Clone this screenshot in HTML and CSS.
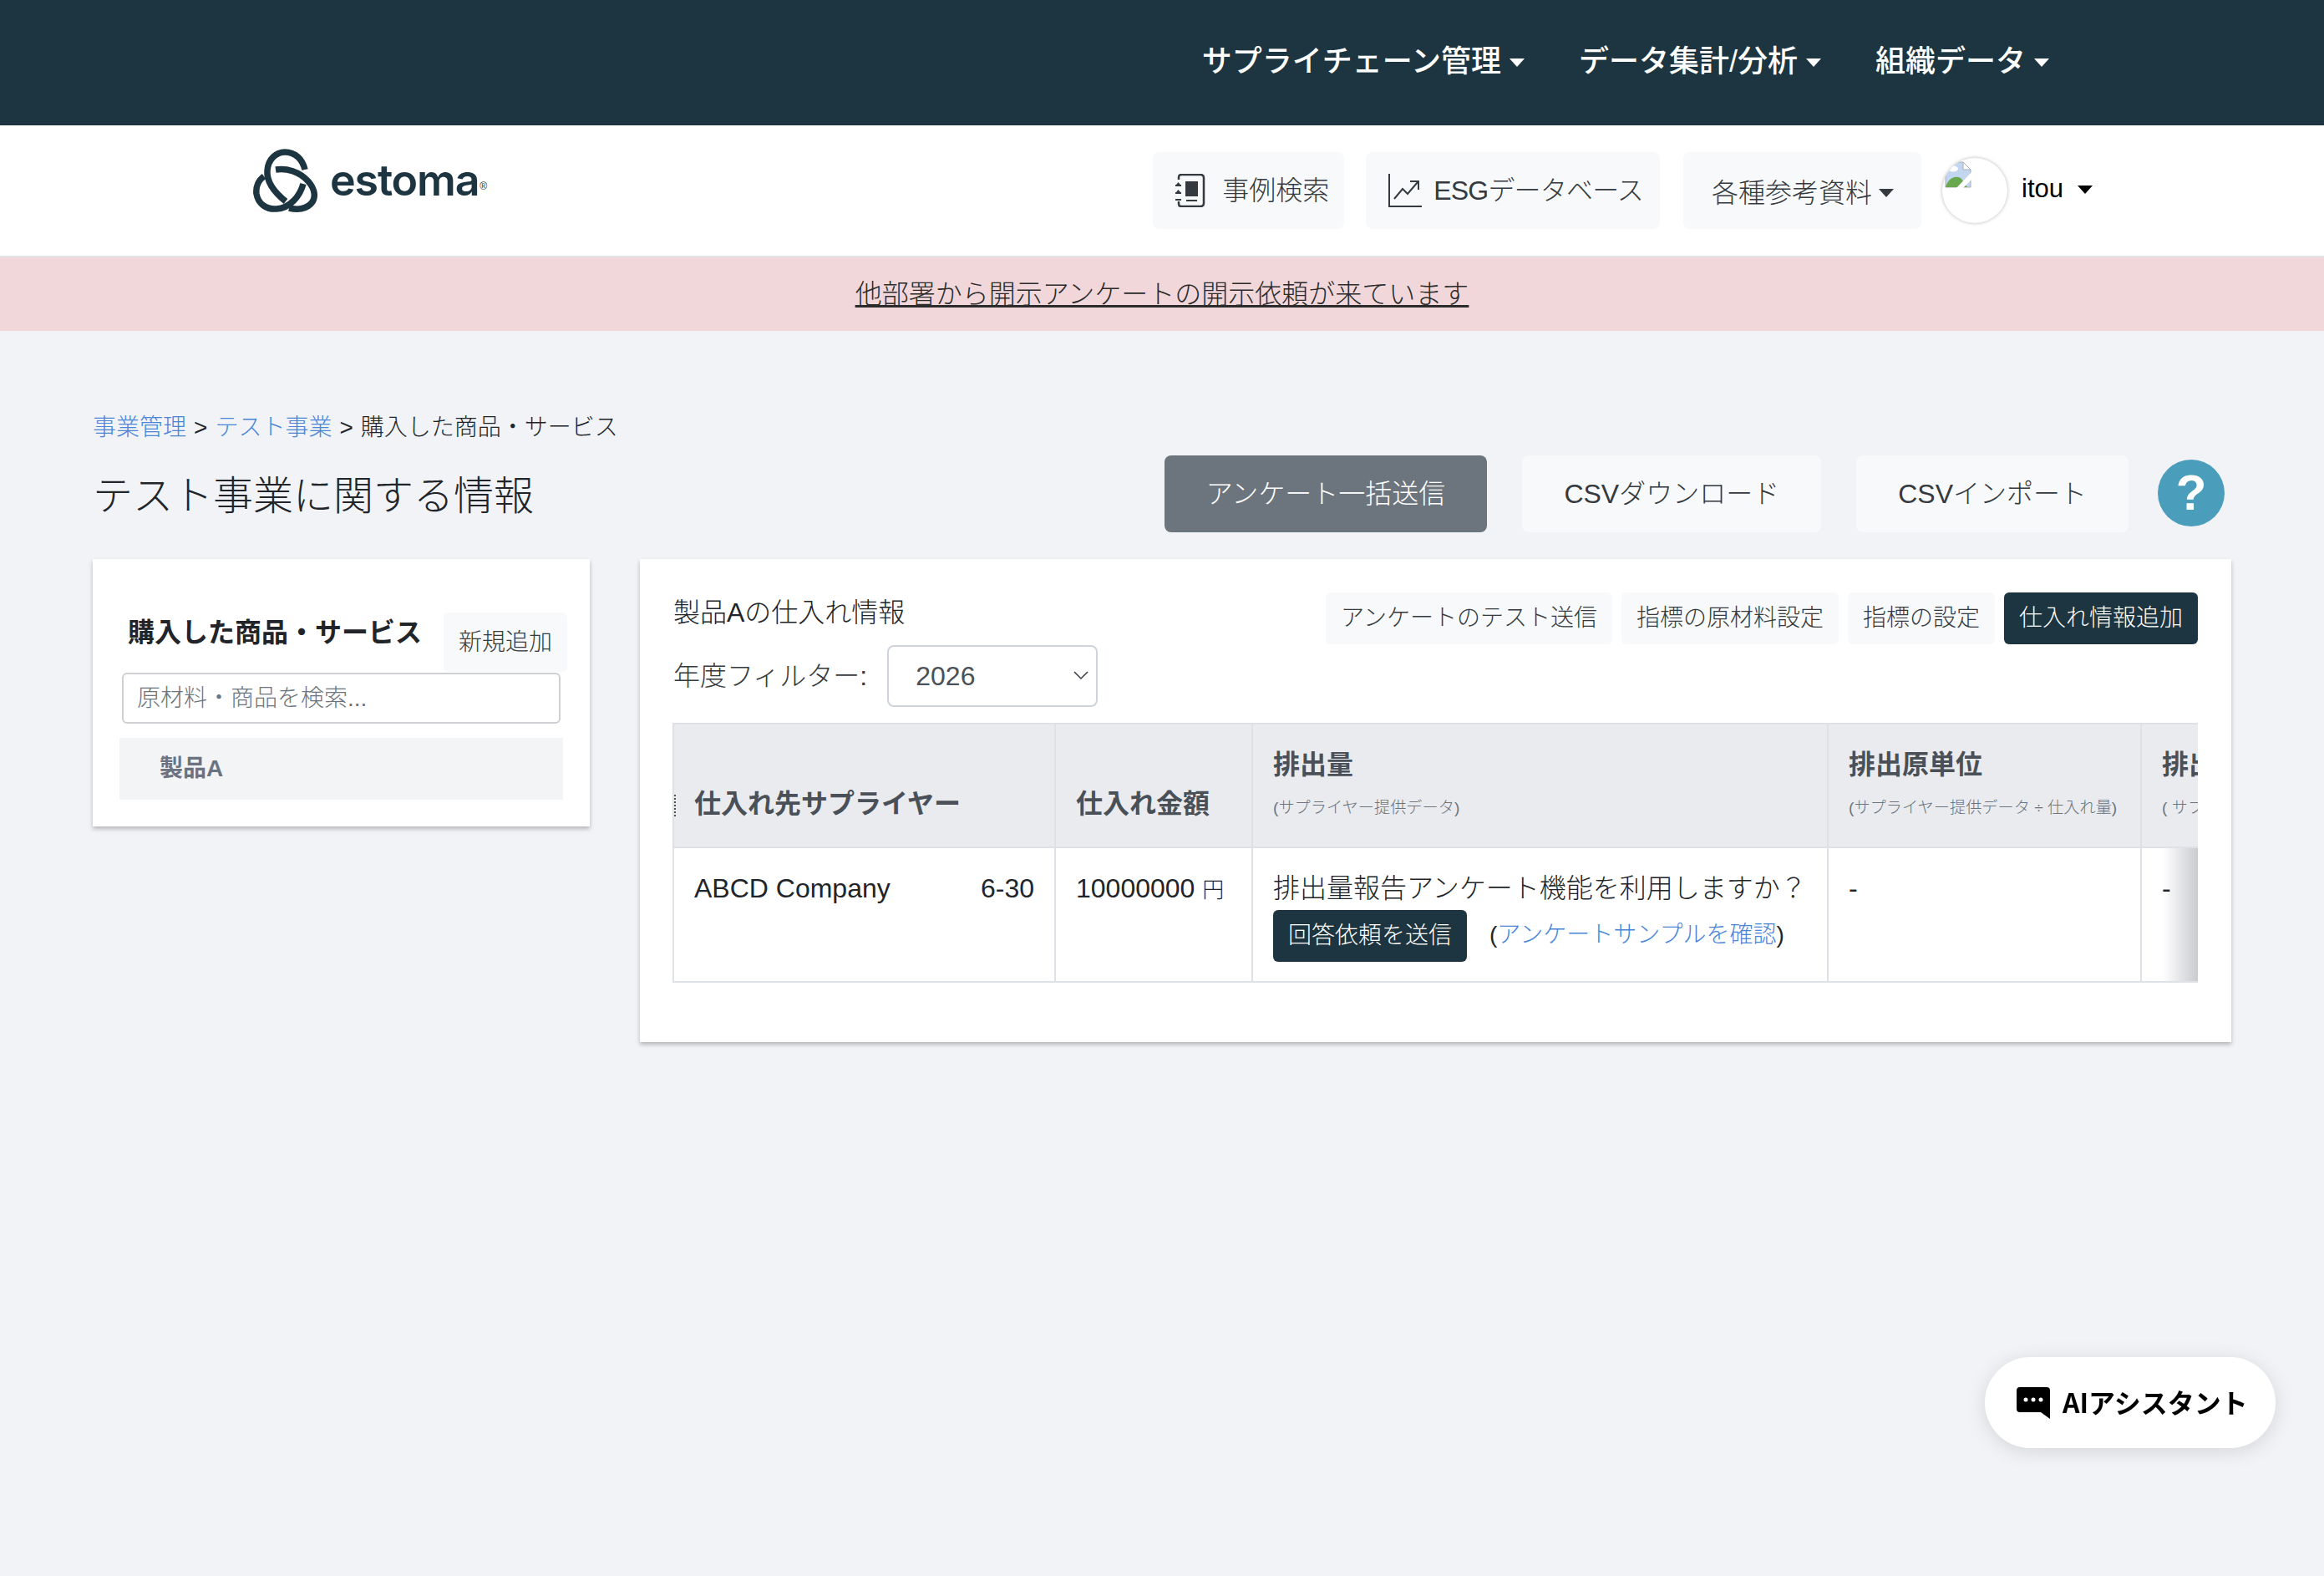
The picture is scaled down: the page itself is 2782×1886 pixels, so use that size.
FILE: index.html
```html
<!DOCTYPE html>
<html lang="ja">
<head>
  <meta charset="UTF-8" />
  <title>estoma</title>
  <link rel="stylesheet" href="styles.css">
</head>
<body>

  <div class="topbar">
    <a class="topbar-link">サプライチェーン管理<span class="caret"></span></a>
    <a class="topbar-link">データ集計/分析<span class="caret"></span></a>
    <a class="topbar-link">組織データ<span class="caret"></span></a>
  </div>

  <header class="header">
    <div class="logo">
      <svg class="logo-mark" viewBox="0 0 80 76" fill="none" stroke="#1d3540" stroke-width="7.5">
        <path d="M39 63 C24 51 16 38 17 26 C18 12 28 4 38 4 C50 4 59 12 62 25" />
        <path d="M27 25 C40 23 55 27 66 39 C74 48 76 59 69 66 C62 73 52 73 43 71" />
        <path d="M13 33 C6 38 3 46 4 54 C6 66 16 73 28 72 C44 71 56 57 60 42" />
      </svg>
      <span class="logo-text">estoma</span><span class="logo-reg">®</span>
    </div>
    <div class="header-actions">
      <a class="light-btn">
        <svg class="btn-icon" viewBox="0 0 36 40" fill="none" stroke="#343a40" stroke-width="2.5">
          <path d="M4 7 V4 Q4 1 7 1 H30 Q34 1 34 5 V35 Q34 39 30 39 H7 Q4 39 4 36 V33" />
          <rect x="12" y="9" width="15" height="18" fill="#343a40" stroke="none" />
          <rect x="13" y="31" width="13" height="2" fill="#343a40" stroke="none" />
          <path d="M0 14 H7 M0 23 H7 M0 31 H7" stroke-width="2" />
          <path d="M3.500 10 L6 13 H1 Z M3.500 19 L6 22 H1 Z" fill="#343a40" stroke="none" />
        </svg>
        事例検索
      </a>
      <a class="light-btn light-btn-esg">
        <svg class="btn-icon chart-icon" viewBox="0 0 40 40" fill="none" stroke="#343a40">
          <path d="M1 0 V39 H40" stroke-width="2" />
          <path d="M7 30 L17 18 L23 24 L35 10 M26 9 H36 V19" stroke-width="2" />
        </svg>
        ESGデータベース
      </a>
      <a class="light-btn light-btn-drop">各種参考資料<span class="caret"></span></a>
      <div class="user">
        <div class="avatar">
          <svg class="broken-img" viewBox="0 0 32 32">
            <path d="M1 1 H22 L31 10 V31 H1 Z" fill="#c3d6ef" stroke="#a8adb3" stroke-width="1" />
            <path d="M22 1 L31 10 H22 Z" fill="#fff" stroke="#a8adb3" stroke-width="1" />
            <path d="M1 31 C4 20 14 16 20 21 L27 31 Z" fill="#6aa84f" />
            <path d="M32 13 L14 32 H22 L32 22 Z" fill="#fff" />
            <ellipse cx="10" cy="9" rx="6" ry="3.500" fill="#fff" />
          </svg>
        </div>
        <span class="user-name">itou</span><span class="caret caret-black"></span>
      </div>
    </div>
  </header>

  <div class="notice"><a>他部署から開示アンケートの開示依頼が来ています</a></div>

  <main class="page">
    <div class="breadcrumb"><a>事業管理</a><span class="sep">&gt;</span><a>テスト事業</a><span class="sep">&gt;</span>購入した商品・サービス</div>

    <div class="title-row">
      <h1>テスト事業に関する情報</h1>
      <div class="title-actions">
        <a class="big-btn big-btn-gray">アンケート一括送信</a>
        <a class="big-btn">CSVダウンロード</a>
        <a class="big-btn">CSVインポート</a>
        <a class="help">?</a>
      </div>
    </div>

    <div class="columns">
      <section class="card side">
        <div class="side-head">
          <h2>購入した商品・サービス</h2>
          <a class="small-btn">新規追加</a>
        </div>
        <input class="search" type="text" placeholder="原材料・商品を検索...">
        <div class="side-item">製品A</div>
      </section>

      <section class="card detail">
        <div class="detail-head">
          <div class="detail-left">
            <div class="detail-name">製品Aの仕入れ情報</div>
            <div class="filter">
              <label>年度フィルター:</label>
              <div class="select">2026
                <svg class="chevron" viewBox="0 0 20 20" fill="none" stroke="#343a40" stroke-width="1.500"><path d="M2 5 L10 13 L18 5" /></svg>
              </div>
            </div>
          </div>
          <div class="detail-actions">
            <a class="small-btn">アンケートのテスト送信</a>
            <a class="small-btn">指標の原材料設定</a>
            <a class="small-btn">指標の設定</a>
            <a class="small-btn small-btn-dark">仕入れ情報追加</a>
          </div>
        </div>

        <div class="table-wrap">
          <table class="data">
            <colgroup>
              <col class="col-a"><col class="col-b"><col class="col-c"><col class="col-d"><col class="col-e">
            </colgroup>
            <thead>
              <tr>
                <th class="th-low th-first">仕入れ先サプライヤー</th>
                <th class="th-low">仕入れ金額</th>
                <th>排出量<small>(サプライヤー提供データ)</small></th>
                <th>排出原単位<small>(サプライヤー提供データ ÷ 仕入れ量)</small></th>
                <th>排出量<small>( サプライヤー提供データ)</small></th>
              </tr>
            </thead>
            <tbody>
              <tr>
                <td><div class="supplier"><span>ABCD Company</span><span>6-30</span></div></td>
                <td>10000000 <span class="unit">円</span></td>
                <td>
                  <div>排出量報告アンケート機能を利用しますか？</div>
                  <div class="answer">
                    <a class="small-btn small-btn-dark">回答依頼を送信</a>
                    <span class="sample">(<a>アンケートサンプルを確認</a>)</span>
                  </div>
                </td>
                <td>-</td>
                <td class="td-fade">-</td>
              </tr>
            </tbody>
          </table>
        </div>
      </section>
    </div>
  </main>

  <a class="chat">
    <svg class="chat-icon" viewBox="0 0 40 38">
      <path d="M4 0 H36 Q40 0 40 4 V38 L29 30 H4 Q0 30 0 26 V4 Q0 0 4 0 Z" fill="#000" />
      <circle cx="11" cy="15" r="2.500" fill="#fff" />
      <circle cx="20" cy="15" r="2.500" fill="#fff" />
      <circle cx="29" cy="15" r="2.500" fill="#fff" />
    </svg>
    <span class="chat-label">AIアシスタント</span>
  </a>

</body>
</html>
```

FILE: styles.css
```css
* {
  box-sizing: border-box;
}
body {
  margin: 0;
  min-height: 1886px;
  background: #f1f3f7;
  color: #212529;
  font-family: "Liberation Sans", "Noto Sans CJK JP", sans-serif;
  font-size: 32px;
  font-weight: 300;
  line-height: 1.5;
}
.caret {
  display: inline-block;
  margin-left: 10px;
  vertical-align: 6px;
  border-top: 10px solid currentColor;
  border-left: 9px solid transparent;
  border-right: 9px solid transparent;
}
.caret-black {
  color: #000;
  margin: 0 0 3px 17px;
  vertical-align: 12px;
}

/* top bar */
.topbar {
  display: flex;
  justify-content: flex-end;
  align-items: center;
  gap: 65px;
  height: 150px;
  padding: 0 329px 2px 0;
  background: #1d3540;
}
.topbar-link {
  color: #fff;
  font-size: 36px;
  font-weight: 500;
}

/* header */
.header {
  display: flex;
  justify-content: space-between;
  height: 158px;
  padding: 32px 277px 0 303px;
  background: #fff;
  border-bottom: 2px solid #e3e4e7;
}
.logo {
  display: flex;
  align-items: flex-start;
  color: #1d3540;
}
.logo-mark {
  width: 80px;
  height: 76px;
  margin-top: -4px;
}
.logo-text {
  margin: 0 0 0 12px;
  font-family: Inter, sans-serif;
  font-size: 52px;
  font-weight: 600;
  line-height: 68px;
  letter-spacing: -1.200px;
}
.logo-reg {
  margin: 29px 0 0 1px;
  font-size: 12px;
  font-weight: 400;
  line-height: 24px;
}
.header-actions {
  display: flex;
  gap: 28px;
}
.light-btn {
  display: flex;
  align-items: center;
  height: 92px;
  padding: 0 18px 0 27px;
  background: #f8f9fa;
  border-radius: 8px;
  color: #343a40;
}
.light-btn-esg {
  margin-left: -2px;
  padding-right: 20px;
  letter-spacing: -0.800px;
}
.btn-icon {
  width: 36px;
  height: 40px;
  margin-right: 20px;
}
.chart-icon {
  width: 40px;
  margin-right: 14px;
}
.light-btn-drop {
  padding: 6px 33px 0 34px;
}
.light-btn-drop .caret {
  margin-left: 8px;
}
.user {
  display: flex;
  align-items: center;
  height: 92px;
  margin-left: -3px;
  color: #000;
  font-weight: 400;
}
.user-name {
  margin: 0 0 3px 17px;
  font-size: 31px;
}
.avatar {
  width: 78px;
  height: 78px;
  border-radius: 50%;
  background: #fff;
  box-shadow: 0 0 4px rgba(0, 0, 0, 0.28);
  overflow: hidden;
}
.broken-img {
  display: block;
  width: 32px;
  height: 32px;
  margin: 4px 0 0 3px;
}

/* notice */
.notice {
  height: 88px;
  padding-top: 20px;
  background: #f2d7da;
  color: #2b2b2b;
  text-align: center;
}
.notice a {
  text-decoration: underline;
}

/* page */
.page {
  padding: 94px 111px 0;
}
.breadcrumb {
  font-size: 28px;
  line-height: 44px;
}
.breadcrumb a {
  color: #4a86d8;
}
.sep {
  margin: 0 9px;
  font-weight: 400;
}
.title-row {
  display: flex;
  justify-content: space-between;
  align-items: center;
  height: 92px;
  margin-top: 11px;
  padding-right: 8px;
}
h1 {
  margin: 0;
  padding-top: 5px;
  font-size: 48px;
  font-weight: 300;
}
.title-actions {
  display: flex;
  align-items: center;
  gap: 42px;
}
.big-btn {
  display: flex;
  align-items: center;
  height: 92px;
  padding: 0 50px;
  background: #f8f9fa;
  border-radius: 8px;
  color: #343a40;
}
.big-btn-gray {
  background: #6c757d;
  color: #fff;
}
.help {
  width: 80px;
  height: 80px;
  margin: -2px 0 0 -7px;
  border-radius: 50%;
  background: #4a9dbb;
  color: #fff;
  font-size: 60px;
  font-weight: 700;
  line-height: 80px;
  text-align: center;
}
.columns {
  display: flex;
  align-items: flex-start;
  gap: 60px;
  margin-top: 32px;
}
.card {
  background: #fff;
  box-shadow: 0 3px 5px rgba(0, 0, 0, 0.25);
}
.side {
  width: 595px;
  height: 320px;
  padding: 64px 27px 0 32px;
}
.side-head {
  display: flex;
  justify-content: space-between;
  height: 72px;
  padding-left: 10px;
}
h2 {
  margin: 2px 0 0;
  font-size: 32px;
  font-weight: 700;
  line-height: 44px;
}
.small-btn {
  display: inline-block;
  height: 62px;
  padding: 0 18px;
  background: #f8f9fa;
  border-radius: 6px;
  color: #343a40;
  font-size: 28px;
  line-height: 62px;
  white-space: nowrap;
}
.side-head .small-btn {
  height: 71px;
  line-height: 72px;
}
.small-btn-dark {
  background: #1d3540;
  color: #fff;
}
.search {
  display: block;
  width: 525px;
  height: 61px;
  margin: 0 0 0 3px;
  padding: 0 16px;
  background: #fff;
  border: 2px solid #ced0d3;
  border-radius: 6px;
  font-family: inherit;
  font-size: 28px;
  font-weight: 300;
}
.search::placeholder {
  color: #6c757d;
}
.side-item {
  width: 531px;
  height: 74px;
  margin-top: 17px;
  padding-left: 48px;
  background: #f3f4f6;
  color: #6b7280;
  font-size: 28px;
  font-weight: 700;
  line-height: 74px;
}
.detail {
  width: 1905px;
  height: 578px;
  padding: 40px 40px 0 40px;
}
.detail-head {
  display: flex;
  justify-content: space-between;
  align-items: flex-start;
  height: 156px;
}
.detail-name {
  line-height: 48px;
}
.filter {
  display: flex;
  align-items: center;
  gap: 24px;
  margin-top: 15px;
}
.filter label {
  color: #343a40;
}
.select {
  display: flex;
  justify-content: space-between;
  align-items: center;
  width: 252px;
  height: 74px;
  padding: 0 8px 0 32px;
  background: #fff;
  border: 2px solid #ced4da;
  border-radius: 8px;
  color: #495057;
  font-weight: 400;
}
.chevron {
  width: 20px;
  height: 20px;
}
.detail-actions {
  display: flex;
  gap: 11px;
}
.table-wrap {
  width: 1826px;
  margin-left: -1px;
  overflow: hidden;
}
.data {
  width: 1961px;
  table-layout: fixed;
  border-collapse: collapse;
}
.col-a { width: 457px; }
.col-b { width: 236px; }
.col-c { width: 689px; }
.col-d { width: 375px; }
.col-e { width: 204px; }
.data th,
.data td {
  padding: 0 24px;
  border: 2px solid #dee2e6;
  vertical-align: top;
  text-align: left;
}
.data th {
  height: 148px;
  padding-top: 24px;
  background: #e9ebef;
  color: #495057;
  font-size: 32px;
  font-weight: 700;
  line-height: 48px;
  white-space: nowrap;
}
.data th.th-low {
  padding-top: 71px;
}
.data th.th-first {
  background-image: repeating-linear-gradient(#555 0 2px, transparent 2px 4px);
  background-repeat: no-repeat;
  background-size: 2px 27px;
  background-position: 0 84px;
}
.data small {
  display: block;
  margin-top: 14px;
  color: #6c757d;
  font-size: 19.200px;
  font-weight: 300;
  line-height: 28px;
}
.data td {
  height: 161px;
  padding-top: 24px;
  line-height: 48px;
}
.supplier {
  display: flex;
  justify-content: space-between;
}
.unit {
  font-size: 26px;
}
.answer {
  display: flex;
  align-items: center;
  margin-top: 2px;
}
.sample {
  margin: -2px 0 0 27px;
  font-size: 28px;
}
.sample a {
  color: #4a86d8;
}
.td-fade {
  background: linear-gradient(to right, #fff 25px, #c9cbcf 67px);
}

/* floating chat button */
.chat {
  position: fixed;
  left: 2376px;
  top: 1624px;
  display: flex;
  align-items: center;
  gap: 15px;
  width: 348px;
  height: 109px;
  padding-left: 38px;
  background: #fff;
  border-radius: 55px;
  box-shadow: 0 4px 24px rgba(0, 0, 0, 0.12);
  color: #000;
  font-family: "Noto Sans CJK JP", sans-serif;
  font-size: 32px;
  font-weight: 700;
}
.chat-icon {
  width: 40px;
  height: 38px;
}
.chat-label {
  margin-bottom: 3px;
}
```
